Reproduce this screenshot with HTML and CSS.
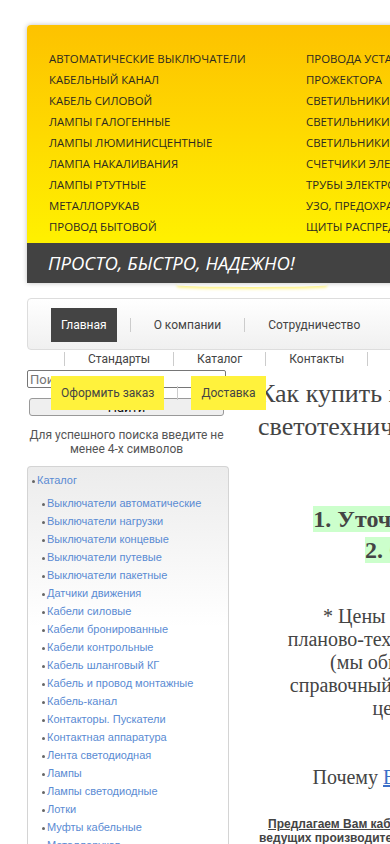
FILE: index.html
```html
<!DOCTYPE html>
<html lang="ru">
<head>
    <meta charset="UTF-8">
    <meta name="viewport" content="width=device-width, initial-scale=1.0">
    <title>Электротехническая продукция</title>
    <link rel="stylesheet" href="styles.css">
</head>
<body>

<div id="page">

    <!-- Шапка с каталогом -->
    <div id="header">
        <div class="header-menu">
            <ul>
                <li><a href="#">Автоматические выключатели</a></li>
                <li><a href="#">Кабельный канал</a></li>
                <li><a href="#">Кабель силовой</a></li>
                <li><a href="#">Лампы галогенные</a></li>
                <li><a href="#">Лампы люминисцентные</a></li>
                <li><a href="#">Лампа накаливания</a></li>
                <li><a href="#">Лампы ртутные</a></li>
                <li><a href="#">Металлорукав</a></li>
                <li><a href="#">Провод бытовой</a></li>
            </ul>
            <ul>
                <li><a href="#">Провода установочные</a></li>
                <li><a href="#">Прожектора</a></li>
                <li><a href="#">Светильники внутренние</a></li>
                <li><a href="#">Светильники наружные</a></li>
                <li><a href="#">Светильники светодиодные</a></li>
                <li><a href="#">Счетчики электроэнергии</a></li>
                <li><a href="#">Трубы электротехнические</a></li>
                <li><a href="#">УЗО, предохранители</a></li>
                <li><a href="#">Щиты распределительные</a></li>
            </ul>
        </div>
        <div class="slogan">ПРОСТО, БЫСТРО, НАДЕЖНО!</div>
    </div>

    <!-- Главное меню -->
    <div id="nav">
        <ul class="menu">
            <li class="item active"><a href="#">Главная</a></li>
            <li class="divider"></li>
            <li class="item"><a href="#">О компании</a></li>
            <li class="divider"></li>
            <li class="item"><a href="#">Сотрудничество</a></li>
            <li class="divider"></li>
            <li class="item"><a href="#">Стандарты</a></li>
            <li class="divider"></li>
            <li class="item"><a href="#">Каталог</a></li>
            <li class="divider"></li>
            <li class="item"><a href="#">Контакты</a></li>
            <li class="divider"></li>
            <li class="item hot"><a href="#">Оформить заказ</a></li>
            <li class="divider"></li>
            <li class="item hot"><a href="#">Доставка</a></li>
        </ul>
    </div>

    <div id="main">

        <!-- Левая колонка -->
        <div id="sidebar">
            <form class="search">
                <input type="text" placeholder="Поиск">
                <button type="button">Найти</button>
                <p class="search-hint">Для успешного поиска введите не менее 4-х символов</p>
            </form>

            <div class="catalog">
                <ul>
                    <li><a href="#">Каталог</a>
                        <ul>
                            <li><a href="#">Выключатели автоматические</a></li>
                            <li><a href="#">Выключатели нагрузки</a></li>
                            <li><a href="#">Выключатели концевые</a></li>
                            <li><a href="#">Выключатели путевые</a></li>
                            <li><a href="#">Выключатели пакетные</a></li>
                            <li><a href="#">Датчики движения</a></li>
                            <li><a href="#">Кабели силовые</a></li>
                            <li><a href="#">Кабели бронированные</a></li>
                            <li><a href="#">Кабели контрольные</a></li>
                            <li><a href="#">Кабель шланговый КГ</a></li>
                            <li><a href="#">Кабель и провод монтажные</a></li>
                            <li><a href="#">Кабель-канал</a></li>
                            <li><a href="#">Контакторы. Пускатели</a></li>
                            <li><a href="#">Контактная аппаратура</a></li>
                            <li><a href="#">Лента светодиодная</a></li>
                            <li><a href="#">Лампы</a></li>
                            <li><a href="#">Лампы светодиодные</a></li>
                            <li><a href="#">Лотки</a></li>
                            <li><a href="#">Муфты кабельные</a></li>
                            <li><a href="#">Металлорукав</a></li>
                            <li><a href="#">Прожекторы</a></li>
                        </ul>
                    </li>
                </ul>
            </div>
        </div>

        <!-- Контент -->
        <div id="content">
            <h1>Как купить кабель или<br>светотехническую продукцию?</h1>

            <h2><span>1. Уточняйте наличие и цены:</span><br><span>2. Оформляйте заказ</span></h2>

            <p class="note">* Цены на сайте указаны по данным<br>планово-технического отдела и носят только<br>(мы обновим эти цены ежедневно)<br>справочный характер. Точную их стоимость<br>цены уточняйте в офисе.</p>

            <p class="why">Почему <a href="#">Вам выгодно работать с нами?</a></p>

            <p class="offer"><u>Предлагаем Вам кабельно-проводниковую продукцию и светильники</u><br>ведущих производителей России и стран СНГ по низким оптовым ценам</p>
        </div>

    </div>
</div>

</body>
</html>
```

FILE: styles.css
```css
html, body {
    overflow-x: hidden;
}

body {
    margin: 0;
    background-color: #fff;
    font-family: Roboto, Arial, sans-serif;
    color: #444;
}

#page {
    width: 940px;
    padding: 25px 0 0 27px;
}

a {
    text-decoration: none;
}

/* Шапка */
#header {
    position: relative;
    border-radius: 4px 4px 0 0;
    box-shadow: 0 0 5px rgba(0, 0, 0, 0.25);
}

#header::after {
    content: "";
    position: absolute;
    left: 150px;
    top: 100%;
    width: 150px;
    height: 4px;
    border-radius: 0 0 50% 50%;
    box-shadow: 0 2px 3px rgba(255, 235, 40, 0.6);
}

.header-menu {
    display: flex;
    padding: 23px 0 6px 22px;
    border-radius: 4px 4px 0 0;
    background: linear-gradient(#fdc200, #fff100);
}

.header-menu ul {
    list-style: none;
    margin: 0;
    padding: 0;
    width: 257px;
}

.header-menu li {
    line-height: 21px;
    font-family: "Open Sans", Arial, sans-serif;
    font-size: 11.4px;
    text-transform: uppercase;
    white-space: nowrap;
}

.header-menu a {
    color: #2c2a20;
}

.slogan {
    height: 40px;
    line-height: 40px;
    padding-left: 21px;
    background-color: #424242;
    color: #fff;
    font-family: "Open Sans", Arial, sans-serif;
    font-style: italic;
    font-size: 18.5px;
}

/* Меню */
#nav {
    position: relative;
    z-index: 2;
    height: 50px;
    margin-top: 15px;
    border: 1px solid #ddd;
    border-radius: 4px;
    background: linear-gradient(#fff, #f0f0f0);
}

.menu {
    display: flex;
    flex-wrap: wrap;
    width: 334px;
    list-style: none;
    margin: 0;
    padding: 9px 0 0 23px;
}

.menu .item a {
    display: block;
    height: 34px;
    line-height: 34px;
    padding: 0 10px;
    font-size: 12px;
    color: #444;
    white-space: nowrap;
}

.menu .active a {
    background-color: #444;
    color: #fff;
}

.menu .hot a {
    background-color: #fff23c;
    color: #444;
}

.menu .divider {
    width: 1px;
    height: 14px;
    margin: 10px 13px 0;
    background-color: #ccc;
}

/* Колонки */
#main {
    display: flex;
    margin-top: 20px;
}

#sidebar {
    width: 202px;
    flex-shrink: 0;
}

.search input {
    display: block;
    box-sizing: border-box;
    width: 199px;
    height: 18px;
    margin: 0;
    padding: 0 2px;
    border: 1px solid #767676;
    border-radius: 2px;
    font-family: Roboto, Arial, sans-serif;
    font-size: 13px;
}

.search button {
    display: block;
    box-sizing: border-box;
    width: 195px;
    height: 18px;
    margin: 10px 0 0 2px;
    padding: 0;
    border: 1px solid #999;
    border-radius: 3px;
    background-color: #efefef;
    font-family: Roboto, Arial, sans-serif;
    font-size: 13px;
    color: #111;
}

.search-hint {
    width: 199px;
    margin: 12px 0 0;
    text-align: center;
    font-size: 12px;
    line-height: 14px;
    color: #555;
}

.catalog {
    margin-top: 10px;
    min-height: 400px;
    border: 1px solid #d4d4d4;
    border-bottom: none;
    border-radius: 4px 4px 0 0;
    background: linear-gradient(#ececec, #fff 160px);
    padding: 4px 0 0 4px;
}

.catalog ul {
    list-style: none;
    margin: 0;
    padding: 0;
}

.catalog ul ul {
    margin-top: 5px;
    padding-left: 10px;
}

.catalog li {
    line-height: 18px;
    font-family: "Liberation Sans", Arial, sans-serif;
    font-size: 11px;
    white-space: nowrap;
}

.catalog li::before {
    content: "";
    display: inline-block;
    width: 3px;
    height: 3px;
    margin-right: 2px;
    vertical-align: middle;
    border-radius: 50%;
    background-color: #666;
}

.catalog a {
    color: #5a8bd3;
}

/* Контент */
#content {
    width: 440px;
    margin-left: 29px;
    font-family: "Liberation Serif", "Times New Roman", serif;
    color: #444;
}

#content h1 {
    margin: 7px 0 0;
    font-size: 26px;
    line-height: 33px;
    font-weight: normal;
    white-space: nowrap;
}

#content h2 {
    margin: 61px 0 0;
    text-align: center;
    font-size: 24px;
    line-height: 31px;
}

#content h2 span {
    background-color: #ccffcc;
}

.note {
    margin: 39px 0 0;
    text-align: center;
    font-size: 20px;
    line-height: 23px;
}

.why {
    margin: 46px 0 0;
    text-align: center;
    font-size: 20px;
    line-height: 23px;
}

.why a {
    color: #3b6fc8;
    text-decoration: underline;
}

.offer {
    margin: 28px 0 0;
    text-align: center;
    font-family: "Liberation Sans", Arial, sans-serif;
    font-size: 12px;
    font-weight: bold;
    line-height: 14px;
}
```
